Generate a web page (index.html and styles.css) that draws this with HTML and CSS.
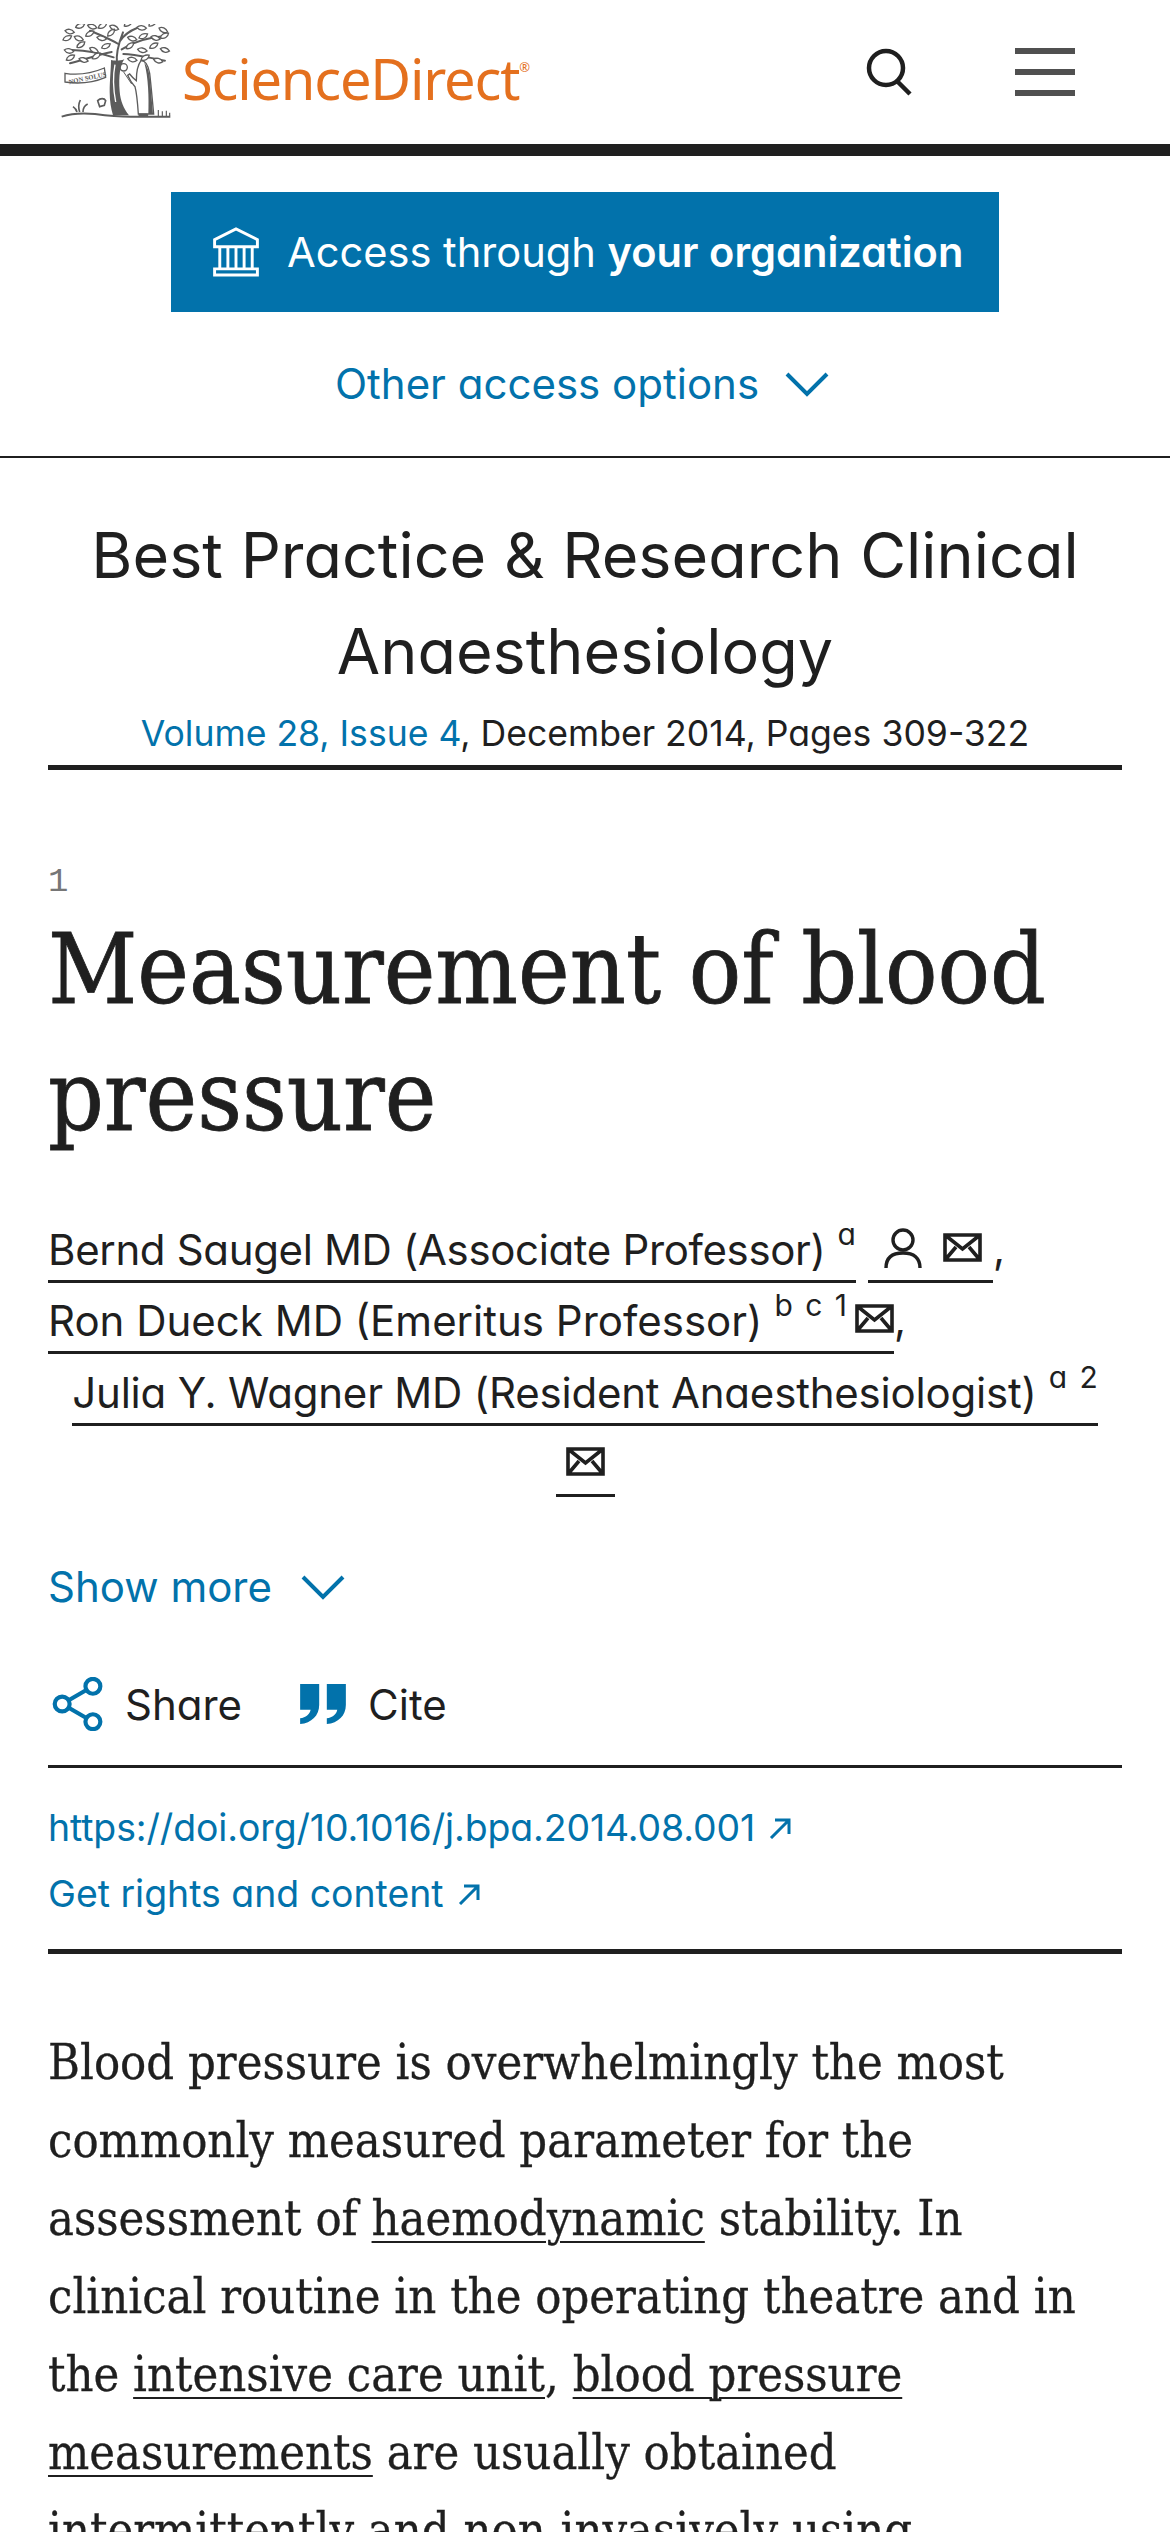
FILE: index.html
```html
<!DOCTYPE html>
<html lang="en">
<head>
<meta charset="utf-8">
<title>Measurement of blood pressure - ScienceDirect</title>
<link rel="stylesheet" href="styles.css">
</head>
<body>
<header class="topbar">
  <a class="brand">
    <svg class="tree" viewBox="18 20 330 285" fill="none" stroke="#5c5c5c">
      <defs>
        <path id="leaf" d="M0 0c5-9 17-12 28-5-5 10-18 13-28 5z" fill="#fff" stroke="#5c5c5c" stroke-width="4"/>
      </defs>
      <g stroke-width="6" stroke-linecap="round">
        <path d="M186 140c-4-30 4-60 18-95M176 120c-30-10-70-20-125-22M200 96c30-20 70-35 130-40M190 80c-25-15-50-25-85-40M205 110c35 0 70 10 125 20M170 104c-40 8-80 22-125 34M196 70c10-15 30-30 50-38"/>
      </g>
      <use href="#leaf" transform="translate(30 40) rotate(20)"/>
      <use href="#leaf" transform="translate(62 30) rotate(-10)"/>
      <use href="#leaf" transform="translate(98 24) rotate(25)"/>
      <use href="#leaf" transform="translate(130 32) rotate(-20)"/>
      <use href="#leaf" transform="translate(164 26) rotate(30)"/>
      <use href="#leaf" transform="translate(208 26) rotate(-25)"/>
      <use href="#leaf" transform="translate(246 30) rotate(15)"/>
      <use href="#leaf" transform="translate(282 26) rotate(-30)"/>
      <use href="#leaf" transform="translate(312 32) rotate(35)"/>
      <use href="#leaf" transform="translate(24 68) rotate(-15)"/>
      <use href="#leaf" transform="translate(58 58) rotate(30)"/>
      <use href="#leaf" transform="translate(92 56) rotate(-20)"/>
      <use href="#leaf" transform="translate(126 60) rotate(20)"/>
      <use href="#leaf" transform="translate(158 56) rotate(-35)"/>
      <use href="#leaf" transform="translate(218 60) rotate(25)"/>
      <use href="#leaf" transform="translate(252 62) rotate(-15)"/>
      <use href="#leaf" transform="translate(288 58) rotate(25)"/>
      <use href="#leaf" transform="translate(316 62) rotate(-20)"/>
      <use href="#leaf" transform="translate(28 98) rotate(20)"/>
      <use href="#leaf" transform="translate(66 90) rotate(-25)"/>
      <use href="#leaf" transform="translate(104 92) rotate(35)"/>
      <use href="#leaf" transform="translate(140 92) rotate(-15)"/>
      <use href="#leaf" transform="translate(214 94) rotate(-30)"/>
      <use href="#leaf" transform="translate(248 96) rotate(20)"/>
      <use href="#leaf" transform="translate(284 92) rotate(-20)"/>
      <use href="#leaf" transform="translate(316 94) rotate(25)"/>
      <use href="#leaf" transform="translate(34 128) rotate(-20)"/>
      <use href="#leaf" transform="translate(72 124) rotate(25)"/>
      <use href="#leaf" transform="translate(112 124) rotate(-25)"/>
      <use href="#leaf" transform="translate(218 124) rotate(20)"/>
      <use href="#leaf" transform="translate(258 128) rotate(-20)"/>
      <use href="#leaf" transform="translate(296 126) rotate(25)"/>
      <path d="M168 128c8 2 24 4 40-2-12 16-18 50-14 96 2 28 12 52 28 72h-48c-6-20-10-44-10-70 0-36 4-70 4-96z" fill="#5c5c5c" stroke="none"/>
      <path d="M180 142c-6 30-6 70 2 112" stroke="#fff" stroke-width="4"/>
      <path d="M204 160c10 14 12 30 4 46-6 12-6 22 2 30" stroke="#fff" stroke-width="4"/>
      <path d="M30 168c36 6 80 0 118-16l4 28c-38 16-84 20-122 14z" fill="#fff" stroke-width="4"/>
      <text x="38" y="190" class="motto" transform="rotate(-12 90 174)">NON SOLUS</text>
      <path d="M258 130c14 0 22 14 26 38 4 34 8 80 12 122h-46c-2-30-4-60-10-82-8-8-16-20-22-34l6-4c6 8 12 14 20 20 0-20 2-44 14-60z" fill="#fff" stroke-width="4"/>
      <path d="M268 136c10 10 16 30 18 60l8 94h-14c2-50 0-110-12-154z" fill="#5c5c5c" stroke="none"/>
      <circle cx="206" cy="150" r="11" stroke-width="4"/>
      <path d="M206 164l24 36" stroke-width="3"/>
      <path d="M74 284c-4-12-4-24 2-36M84 284c0-12 6-20 14-24M66 284c-2-8-6-12-12-16M128 250c8-8 20-8 24 0l-4 14-14 4z" stroke-width="5"/>
      <path d="M20 298c30-10 60-12 100-8 30 4 80 8 108 8h118" stroke-width="6"/>
      <path d="M310 296v-18M322 296v-14M334 296v-16M344 296v-10" stroke-width="3.5"/>
      <path d="M252 296h26v-6h-26z" fill="#5c5c5c" stroke-width="3"/>
    </svg>
    <span class="wordmark">ScienceDirect<sup class="reg">®</sup></span>
  </a>
  <div class="top-actions">
    <svg class="search" viewBox="0 0 46 48" fill="none" stroke="#1f1f1f" stroke-width="4.5">
      <circle cx="20" cy="20" r="17"/>
      <path d="M31 33l13 13"/>
    </svg>
    <div class="burger"><i></i><i></i><i></i></div>
  </div>
</header>

<section class="access">
  <a class="access-btn">
    <svg class="bank" viewBox="36 28 148 152" fill="none" stroke="#fff" stroke-width="9">
      <path d="M44 88V66l66-33 66 33v22z"/>
      <path d="M60 88v68M85 92v64M110 92v64M135 92v64M160 88v68"/>
      <path d="M44 156h132v19H44z"/>
    </svg>
    <span class="access-label">Access through <b>your organization</b></span>
  </a>
  <a class="link-row access-more">Other access options
    <svg class="chev" viewBox="0 0 44 26" fill="none" stroke="#0272ab" stroke-width="4"><path d="M2 3l20 20L42 3"/></svg>
  </a>
</section>

<main class="article">
  <h2 class="journal">Best Practice &amp; Research Clinical Anaesthesiology</h2>
  <p class="issue"><a class="blue">Volume 28, Issue 4</a>, December 2014, Pages 309-322</p>
  <div class="note-mark">1</div>
  <h1 class="title">Measurement of blood pressure</h1>

  <div class="authors">
    <div class="author-line"><a class="au first">Bernd Saugel MD (Associate Professor)<sup>a</sup></a><a class="au ic-gap">
      <svg class="person" viewBox="0 0 38 40" fill="none" stroke="#1f1f1f" stroke-width="3.4"><circle cx="19" cy="12" r="10"/><path d="M2 40c0-10 6-15 17-15s17 5 17 15"/></svg>
      <svg class="mail" viewBox="0 0 39 29" fill="none" stroke="#1f1f1f" stroke-width="3.6"><path d="M2 2h35v25H2zM2 2l17.500 14L37 2M2 27l11-13M37 27L26 14"/></svg></a>,</div>
    <div class="author-line"><a class="au">Ron Dueck MD (Emeritus Professor)<sup>b c 1</sup><svg class="mail tight" viewBox="0 0 39 29" fill="none" stroke="#1f1f1f" stroke-width="3.6"><path d="M2 2h35v25H2zM2 2l17.500 14L37 2M2 27l11-13M37 27L26 14"/></svg></a>,</div>
    <div class="author-line center"><a class="au third">Julia Y. Wagner MD (Resident Anaesthesiologist)<sup>a 2</sup></a></div>
    <div class="author-line center"><a class="au lone"><svg class="mail" viewBox="0 0 39 29" fill="none" stroke="#1f1f1f" stroke-width="3.6"><path d="M2 2h35v25H2zM2 2l17.500 14L37 2M2 27l11-13M37 27L26 14"/></svg></a></div>
  </div>

  <a class="link-row show-more">Show more
    <svg class="chev" viewBox="0 0 44 26" fill="none" stroke="#0272ab" stroke-width="4"><path d="M2 3l20 20L42 3"/></svg>
  </a>

  <div class="tools">
    <a class="tool">
      <svg class="share" viewBox="0 0 54 58" fill="none" stroke="#0272ab" stroke-width="4.5">
        <circle cx="43" cy="10" r="8"/><circle cx="10" cy="29" r="8"/><circle cx="43" cy="48" r="8"/>
        <path d="M17 25l19-11M17 33l19 11"/>
      </svg>Share</a>
    <a class="tool">
      <svg class="quote" viewBox="0 0 48 42" fill="#0272ab"><path d="M0 0h20v22c0 11-8 19-20 20v-6c6-1 10-4 11-9H0zM28 0h20v22c0 11-8 19-20 20v-6c6-1 10-4 11-9H28z"/></svg>Cite</a>
  </div>

  <div class="links">
    <a class="blue ext doi">https://doi.org/10.1016/j.bpa.2014.08.001<svg class="arrow" viewBox="0 0 22 22" fill="none" stroke="#0272ab" stroke-width="3"><path d="M6 3h14v14M20 3L2 21"/></svg></a>
    <a class="blue ext">Get rights and content<svg class="arrow" viewBox="0 0 22 22" fill="none" stroke="#0272ab" stroke-width="3"><path d="M6 3h14v14M20 3L2 21"/></svg></a>
  </div>

  <p class="abstract">Blood pressure is overwhelmingly the most commonly measured parameter for the assessment of <u>haemodynamic</u> stability. In clinical routine in the operating theatre and in the <u>intensive care unit</u>, <u>blood pressure measurements</u> are usually obtained intermittently and non-invasively using</p>
</main>
</body>
</html>
```
FILE: styles.css
```css
* { box-sizing: border-box; }
html, body { margin: 0; height: 2532px; overflow: hidden; background: #fff; }
body { font-family: Inter, "Noto Sans", sans-serif; font-feature-settings: "cv11"; color: #1f1f1f; }
a { color: inherit; text-decoration: none; }
.blue { color: #0272ab; }

.topbar { height: 156px; border-bottom: 12px solid #1f1f1f; display: flex; justify-content: space-between; align-items: flex-start; padding: 24px 95px 0 61px; }
.brand { display: flex; align-items: flex-start; gap: 11px; }
.tree { width: 110px; height: 95px; display: block; }
.motto { font: 700 20px "Liberation Serif", serif; fill: #5c5c5c; stroke: none; }
.wordmark { font-family: "Noto Sans", sans-serif; font-feature-settings: normal; font-size: 56px; line-height: 70px; color: #e4701e; margin-top: 19px; letter-spacing: -1.2px; white-space: nowrap; }
.reg { font-size: 13px; vertical-align: 28px; line-height: 0; letter-spacing: 0; }
.top-actions { display: flex; align-items: flex-start; gap: 103px; padding-top: 24px; }
.search { width: 46px; height: 48px; display: block; }
.burger { width: 60px; display: flex; flex-direction: column; gap: 15px; }
.burger i { display: block; height: 6px; background: #505050; }

.access { height: 302px; border-bottom: 2px solid #1f1f1f; display: flex; flex-direction: column; align-items: center; padding-top: 36px; }
.access-btn { width: 828px; height: 120px; background: #0272ab; color: #fff; display: flex; align-items: center; gap: 27px; padding-left: 41px; font-size: 41.6px; white-space: nowrap; }
.access-label b { font-weight: 600; }
.bank { width: 48px; height: 50px; flex: none; }
.link-row { color: #0272ab; font-size: 42px; display: flex; align-items: center; gap: 26px; }
.access-more { margin: 46px 6px 0 0; }
.chev { width: 44px; height: 26px; flex: none; }

.article { padding: 0 48px; }
.journal { margin: 49px 20px 0; font-size: 62.9px; line-height: 96px; font-weight: 400; text-align: center; }
.issue { margin: 9px 0 0; height: 62px; border-bottom: 5px solid #1f1f1f; font-size: 35.6px; line-height: 52px; text-align: center; }
.note-mark { margin-top: 92px; font-family: "Liberation Mono", monospace; font-size: 34px; line-height: 40px; color: #767676; }
.title { margin: 4px 0 0; font-family: "DejaVu Serif Condensed", "DejaVu Serif", serif; font-size: 97px; line-height: 127px; font-weight: 400; -webkit-text-stroke: 0.8px #1f1f1f; }

.authors { margin-top: 51px; font-size: 42px; }
.author-line { line-height: 70px; height: 71.500px; display: flex; align-items: flex-end; }
.author-line.center { justify-content: center; }
.au { display: inline-flex; align-items: flex-end; border-bottom: 3px solid #1f1f1f; height: 64px; line-height: 60px; white-space: nowrap; }
.au.first { letter-spacing: -0.35px; }
.au.third { letter-spacing: -0.2px; }
.au sup { font-size: 30px; line-height: 30px; align-self: flex-start; margin-left: 12px; word-spacing: 4px; letter-spacing: 0; }
.ic-gap { margin-left: 12px; padding: 0 11px 0 16px; gap: 21px; }
.person { width: 38px; height: 40px; margin-bottom: 12px; }
.mail { width: 39px; height: 29px; margin-bottom: 18px; }
.tight { margin-left: 8px; }
.lone { padding: 0 10px; }

.show-more { margin-top: 64px; gap: 29px; }
.tools { display: flex; gap: 57px; margin-top: 65px; padding: 0 0 34px 4px; border-bottom: 3px solid #1f1f1f; font-size: 42px; }
.tool { display: flex; align-items: center; gap: 21px; }
.share { width: 52px; height: 54px; }
.quote { width: 48px; height: 40px; }
.links { padding: 35px 0 30px; border-bottom: 5px solid #1f1f1f; font-size: 37.4px; display: flex; flex-direction: column; gap: 16px; }
.ext { display: flex; align-items: center; gap: 14px; line-height: 50px; }
.doi { letter-spacing: -0.1px; }
.arrow { width: 22px; height: 22px; }
.abstract { margin: 69px 0 0; font-family: "DejaVu Serif Condensed", "DejaVu Serif", serif; font-size: 48.400px; line-height: 78px; -webkit-text-stroke: 0.3px #1f1f1f; }
.abstract u { text-decoration-thickness: 2px; text-underline-offset: 6px; }
```
